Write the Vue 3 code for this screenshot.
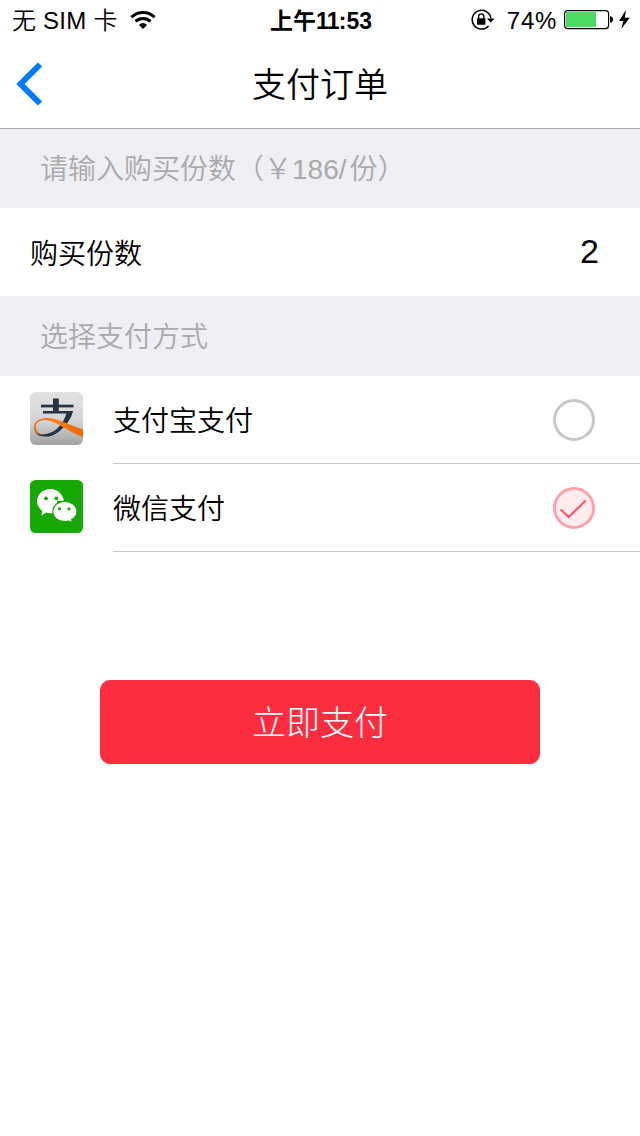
<script setup>
import { ref } from 'vue'

const price = 186
const count = ref(2)
const selected = ref('wechat')
const methods = [
  { id: 'alipay', name: '支付宝支付' },
  { id: 'wechat', name: '微信支付' },
]
</script>

<template>
  <main class="screen">
    <div class="status">
      <div class="carrier">
        <span>无</span><span class="sim">SIM</span><span>卡</span>
        <svg class="wifi" width="26" height="20" viewBox="0 0 26 20">
          <g fill="none" stroke="#000" stroke-width="3">
            <path d="M1.4 7.3Q6.3 2.5 13 2.5T24.6 7.3" />
            <path d="M5.5 11.4Q8.6 8.4 13 8.4T20.5 11.4" />
          </g>
          <path d="M9 15Q10.8 13 13 13T17 15L13 19Z" />
        </svg>
      </div>
      <div class="time"><span>上午</span><span class="ones">11</span><span class="rest">:53</span></div>
      <div class="power">
        <svg width="24" height="22" viewBox="0 0 24 22">
          <path d="M17.6 16.9A9.4 9.4 0 1 1 19.9 9.4" fill="none" stroke="#000" stroke-width="1.5" />
          <path d="M15.8 9.4H23.6L19.8 13.4Z" />
          <rect x="6" y="9.2" width="8.4" height="6.6" rx=".6" />
          <path d="M7.6 10V7.5a2.6 2.6 0 0 1 5.2 0V10" fill="none" stroke="#000" stroke-width="1.4" />
        </svg>
        <span class="percent">74%</span>
        <svg width="67" height="22" viewBox="0 0 67 22">
          <rect x=".6" y="1.6" width="44" height="18" rx="3" fill="#fff" stroke="#000" stroke-width="1.2" />
          <rect x="2" y="3" width="30" height="15" fill="#4cd964" />
          <path d="M46 7.2Q49 7.5 49 10.5T46 13.8Z" />
          <path d="M62 .8L55 12H59.4L57.2 20L65.8 8.8H60.7Z" />
        </svg>
      </div>
    </div>

    <header class="nav">
      <svg class="back" width="28" height="44" viewBox="0 0 28 44">
        <path d="M25 2.5L5.5 22L25 41.5" fill="none" stroke="#007aff" stroke-width="6" />
      </svg>
      <h1>支付订单</h1>
    </header>

    <h2 class="section first">请输入购买份数（￥{{ price }}<span class="slash">/</span>份）</h2>
    <div class="quantity">
      <span>购买份数</span>
      <span class="count">{{ count }}</span>
    </div>

    <h2 class="section">选择支付方式</h2>
    <div v-for="m in methods" :key="m.id" class="method" @click="selected = m.id">
      <svg v-if="m.id === 'alipay'" class="logo" width="53" height="53" viewBox="0 0 53 53">
        <defs>
          <linearGradient id="silver" x1="0" y1="0" x2="0" y2="1">
            <stop offset="0" stop-color="#e3e3e3" />
            <stop offset=".55" stop-color="#d4d4d4" />
            <stop offset="1" stop-color="#a2a2a2" />
          </linearGradient>
          <linearGradient id="ribbon" x1="0" y1="0" x2="1" y2="0">
            <stop offset="0" stop-color="#e8670a" />
            <stop offset=".45" stop-color="#ff7e16" />
            <stop offset="1" stop-color="#f06404" />
          </linearGradient>
        </defs>
        <rect width="53" height="53" rx="6" fill="url(#silver)" />
        <g fill="#263344">
          <rect x="23" y="6.5" width="5.8" height="14" />
          <rect x="11" y="12.7" width="32.5" height="2.7" />
          <path d="M13 19H43Q41.5 26.5 35.2 33.6Q29 41 22.5 43.4Q15.5 45.6 9.5 43.8Q5.2 42 4.3 36.5Q7 42 13 42.4Q22 42.2 28.5 35.3Q34.5 29 36.3 21.6H13Z" />
        </g>
        <path d="M4.3 37C2.8 29.5 10 25.8 18 26.1C30 26.8 39 33.6 53 37.5V45C39.5 40.5 29.5 31 18.5 28.4C10.5 26.9 5.7 30.2 5.7 34.8C5.9 38.5 8 41.6 12.5 42.9C8 42.8 5 40.5 4.3 37Z" fill="url(#ribbon)" />
      </svg>
      <svg v-else class="logo" width="53" height="53" viewBox="0 0 53 53">
        <rect width="53" height="53" rx="5.5" fill="#18a805" />
        <path d="M20.7 9C13 9 7 14.4 7 21.3C7 25.2 9 28.4 12.2 30.8L11.4 35.4L16.3 32.5Q18.5 33.4 22 33.2H27V21H34C32.8 14 27.5 9 20.7 9Z" fill="#fff" />
        <path d="M34.8 21.3C28 21.3 22.8 25.8 22.8 31.5C22.8 37.3 28 41.7 34.8 41.7Q37 41.7 38.8 41L42.6 42.9L41.6 39.5C45 37.6 47 34.9 47 31.5C47 25.8 41.5 21.3 34.8 21.3Z" fill="#fff" stroke="#18a805" stroke-width="1.2" />
        <g fill="#18a805">
          <circle cx="16" cy="18.4" r="1.9" /><circle cx="26.3" cy="18.4" r="1.9" />
          <circle cx="29.5" cy="28.8" r="1.6" /><circle cx="39" cy="28.8" r="1.6" />
        </g>
      </svg>
      <div class="detail">
        <span>{{ m.name }}</span>
        <svg class="radio" width="42" height="42" viewBox="0 0 42 42">
          <circle v-if="selected !== m.id" cx="21" cy="21" r="19.5" fill="#fff" stroke="#c8c8c8" stroke-width="3" />
          <template v-else>
            <circle cx="21" cy="21" r="19.5" fill="#ffecee" stroke="#ffa1aa" stroke-width="3" />
            <path d="M8.3 23L15.8 30L32.2 14" fill="none" stroke="#ff5a6a" stroke-width="2.3" stroke-linecap="round" />
          </template>
        </svg>
      </div>
    </div>

    <button class="pay">立即支付</button>
  </main>
</template>

<style>
body {
  background: #fff;
}
</style>

<style scoped>
.screen {
  display: flex;
  flex-direction: column;
  width: 640px;
  height: 1136px;
  overflow: hidden;
  background: #fff;
  color: #000;
  font-family: "Liberation Sans", "Noto Sans CJK SC", sans-serif;
  font-weight: 350;
  font-size: 28px;
}
.status {
  display: grid;
  grid-template-columns: 1fr auto 1fr;
  align-items: center;
  height: 40px;
  padding: 0 9px 0 12px;
  font-size: 24px;
  line-height: 38px;
}
.status span {
  padding-top: 2px;
}
.carrier {
  display: flex;
  align-items: center;
}
.sim {
  margin: 0 7px;
  letter-spacing: 0.3px;
}
.wifi {
  margin-left: 12px;
}
.time {
  display: flex;
  margin-right: 1px;
  font-size: 23px;
  font-weight: 700;
}
.ones {
  letter-spacing: -0.8px;
}
.rest {
  letter-spacing: 0;
}
.power {
  display: flex;
  align-items: center;
  justify-content: flex-end;
}
.percent {
  margin: 0 7px 0 12px;
  letter-spacing: 0.7px;
}
.nav {
  display: grid;
  grid-template-columns: 60px 1fr 60px;
  align-items: center;
  box-sizing: border-box;
  height: 89px;
  border-bottom: 1px solid #a7a7ac;
}
.back {
  margin-left: 15px;
}
h1 {
  margin: 0;
  padding-bottom: 3px;
  font-size: 34px;
  font-weight: 350;
  text-align: center;
}
.section {
  margin: 0;
  height: 80px;
  padding: 2px 0 0 40px;
  box-sizing: border-box;
  background: #efeff4;
  color: #aaa;
  font-size: 28px;
  font-weight: 350;
  line-height: 80px;
}
.section.first {
  height: 79px;
  padding-top: 1px;
  line-height: 79px;
}
.slash {
  margin-right: 3px;
}
.quantity {
  display: flex;
  align-items: center;
  justify-content: space-between;
  height: 88px;
  padding: 0 41px 0 30px;
  box-sizing: border-box;
}
.count {
  padding-bottom: 2px;
  font-size: 34px;
}
.method {
  display: flex;
  height: 88px;
}
.logo {
  flex: none;
  margin: 16px 30px 0;
}
.detail {
  display: flex;
  flex: 1;
  align-items: center;
  justify-content: space-between;
  box-sizing: border-box;
  padding-right: 45px;
  border-bottom: 1px solid #c8c7cc;
}
.detail span {
  padding-bottom: 2px;
}
.pay {
  width: 440px;
  height: 84px;
  margin: 128px auto 0;
  padding: 0 0 3px;
  border: 0;
  border-radius: 10px;
  background: #fd2d40;
  color: #fff;
  font-family: inherit;
  font-size: 34px;
  font-weight: 300;
}
</style>
